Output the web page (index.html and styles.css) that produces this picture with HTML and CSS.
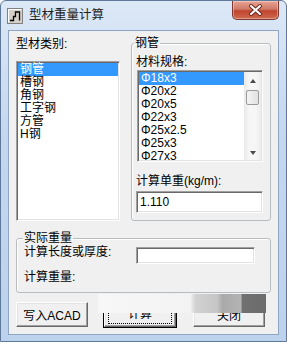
FILE: index.html
```html
<!DOCTYPE html>
<html lang="zh-CN">
<head>
    <meta charset="UTF-8">
    <title>型材重量计算</title>
    <link rel="stylesheet" href="styles.css">
</head>
<body>

    <div class="window">
        <!-- Title Bar -->
        <div class="titlebar">
            <svg class="app-icon" width="16" height="16" viewBox="0 0 16 16">
                <rect x="0.5" y="0.5" width="15" height="15" fill="#d4d0c8" stroke="#808080"/>
                <path d="M1.5 14.5 V1.5 H14.5" fill="none" stroke="#fff"/>
                <path d="M3 12.5 H6.5 V8.5 H8.5 V4 H12.5 V12.5" fill="none" stroke="#000" stroke-width="1.3"/>
            </svg>
            <span class="title">型材重量计算</span>
            <div class="close-btn">
                <svg width="45" height="18" viewBox="0 0 45 18">
                    <path d="M18 5 L27 13 M27 5 L18 13" stroke="#6b2a22" stroke-width="4" stroke-linecap="round"/>
                    <path d="M18 5 L27 13 M27 5 L18 13" stroke="#fff" stroke-width="2" stroke-linecap="round"/>
                </svg>
            </div>
        </div>

        <div class="client">
            <div class="main">
                <div class="category">
                    <div class="label">型材类别:</div>
                    <ul class="listbox cat-list">
                        <li class="selected">钢管</li>
                        <li>槽钢</li>
                        <li>角钢</li>
                        <li>工字钢</li>
                        <li>方管</li>
                        <li>H钢</li>
                    </ul>
                </div>

                <fieldset class="group spec-group">
                    <legend>钢管</legend>
                    <div class="label spec-label">材料规格:</div>
                    <div class="listbox spec-list">
                        <ul class="items">
                            <li class="selected">Φ18x3</li>
                            <li>Φ20x2</li>
                            <li>Φ20x5</li>
                            <li>Φ22x3</li>
                            <li>Φ25x2.5</li>
                            <li>Φ25x3</li>
                            <li>Φ27x3</li>
                        </ul>
                        <div class="scrollbar">
                            <span class="arrow up"></span>
                            <span class="thumb"></span>
                            <span class="arrow down"></span>
                        </div>
                    </div>
                    <div class="label unit-label">计算单重(kg/m):</div>
                    <div class="textbox unit-box">1.110</div>
                </fieldset>
            </div>

            <fieldset class="group weight-group">
                <legend>实际重量</legend>
                <div class="row">
                    <span class="label len-label">计算长度或厚度:</span>
                    <span class="textbox len-box"></span>
                </div>
                <div class="label weight-label">计算重量:</div>
            </fieldset>

            <div class="buttons">
                <button class="btn">写入ACAD</button>
                <button class="btn default"><span class="focus">计算</span></button>
                <button class="btn">关闭</button>
            </div>

            <!-- redraw smear over the buttons -->
            <div class="smear"></div>
        </div>
    </div>

</body>
</html>
```

FILE: styles.css
```css
body {
    margin: 0;
    background: #fff;
}

.window {
    width: 287px;
    height: 342px;
    box-sizing: border-box;
    border: 1px solid #5d7898;
    border-radius: 6px 6px 0 0;
    background: linear-gradient(#dce8f6, #c4d7ef 40%, #bdd2ec);
    font: 12px "Liberation Sans", "Noto Sans CJK SC", sans-serif;
    color: #000;
    overflow: hidden;
}

/* Title Bar */
.titlebar {
    height: 29px;
    display: flex;
    align-items: flex-start;
    padding-left: 6px;
}

.app-icon {
    margin-top: 7px;
    flex: none;
}

.title {
    margin: 7px 0 0 6px;
    font-size: 12.5px;
    line-height: 15px;
    color: #1e1e1e;
}

.close-btn {
    margin-left: auto;
    margin-right: 7px;
    width: 45px;
    height: 18px;
    border: 1px solid #7e3a32;
    border-top: none;
    border-radius: 0 0 5px 5px;
    background: linear-gradient(#e8a393, #d07a68 45%, #c0442f 55%, #cf6a4f);
    box-shadow: inset 0 0 0 1px rgba(255, 255, 255, 0.35);
}

.close-btn svg {
    display: block;
}

/* Client area */
.client {
    position: relative;
    margin: 0 7px;
    height: 305px;
    box-sizing: border-box;
    border: 1px solid #8ea5c3;
    background: #f0f0f0;
    padding: 5px 7px 0 7px;
}

.label {
    line-height: 14px;
    white-space: nowrap;
}

.main {
    display: flex;
    gap: 11px;
}

.category {
    width: 104px;
}

.category .label {
    margin-top: 1px;
}

.listbox {
    margin: 0;
    padding: 1px;
    list-style: none;
    background: #fff;
    border: 1px solid;
    border-color: #a0a0a0 #fff #fff #a0a0a0;
    box-shadow: inset 1px 1px 0 #696969, inset -1px -1px 0 #e3e3e3;
    box-sizing: border-box;
}

.listbox li {
    height: 13px;
    line-height: 13px;
    padding-left: 2px;
    white-space: nowrap;
}

.listbox li.selected {
    background: #3399ff;
    color: #fff;
}

.cat-list {
    margin-top: 10px;
    height: 160px;
    padding-top: 1px;
}

.cat-list li {
    padding-left: 2px;
}

/* Group boxes */
.group {
    margin: 0;
    min-width: 0;
    border: 1px solid #b9bcbf;
    border-radius: 3px;
    box-shadow: inset 1px 1px 0 #fff;
}

.group legend {
    padding: 0 1px;
    line-height: 14px;
}

.spec-group {
    width: 140px;
    box-sizing: border-box;
    padding: 0 7px 7px 4px;
}

.spec-group legend {
    margin-left: -2px;
}

.spec-label {
    margin-top: 5px;
}

.spec-list {
    display: flex;
    margin: 1px 0 0 1px;
    width: 126px;
    height: 92px;
    overflow: hidden;
}

.spec-list .items {
    flex: 1;
    margin: 0;
    padding: 0;
    list-style: none;
    overflow: hidden;
}

.spec-list .items li {
    padding-left: 2px;
}

.scrollbar {
    width: 17px;
    flex: none;
    display: flex;
    flex-direction: column;
    align-items: center;
    background: linear-gradient(to right, #e9e9e9, #f6f6f6 30%, #f6f6f6 70%, #ececec);
}

.arrow {
    width: 0;
    height: 0;
    border-left: 3.5px solid transparent;
    border-right: 3.5px solid transparent;
}

.arrow.up {
    margin-top: 7px;
    border-bottom: 4px solid #4a4a4a;
}

.arrow.down {
    margin-top: auto;
    margin-bottom: 5px;
    border-top: 4px solid #4a4a4a;
}

.thumb {
    margin-top: 7px;
    width: 13px;
    height: 15px;
    box-sizing: border-box;
    border: 1px solid #9a9a9a;
    border-radius: 2px;
    background: linear-gradient(to right, #f4f4f4, #e2e2e2);
}

.unit-label {
    margin-top: 12px;
}

.textbox {
    display: block;
    box-sizing: border-box;
    background: #fff;
    border: 1px solid;
    border-color: #a0a0a0 #fff #fff #a0a0a0;
    box-shadow: inset 1px 1px 0 #696969, inset -1px -1px 0 #e3e3e3;
}

.unit-box {
    margin-top: 3px;
    height: 22px;
    line-height: 20px;
    padding-left: 3px;
}

.weight-group {
    margin-top: 10px;
    padding: 0 7px 8px 7px;
}

.weight-group legend {
    margin-left: -1px;
}

.row {
    display: flex;
    align-items: flex-start;
}

.len-label {
    width: 112px;
}

.len-box {
    margin-top: 2px;
    width: 119px;
    height: 17px;
}

.weight-label {
    margin-top: 6px;
}

/* Buttons */
.buttons {
    display: flex;
    gap: 16px;
    margin-top: 9px;
}

.btn {
    width: 72px;
    height: 25px;
    padding: 0;
    font: inherit;
    color: #000;
    background: #f0f0f0;
    border: 1px solid;
    border-color: #fff #696969 #696969 #fff;
    box-shadow: inset -1px -1px 0 #a0a0a0, inset 1px 1px 0 #e3e3e3;
}

.btn.default {
    outline: 1px solid #000;
}

.btn .focus {
    display: block;
    margin: 0 3px;
    line-height: 17px;
    border: 1px dotted #000;
}

.btn:last-child {
    margin-left: 1px;
}

.smear {
    position: absolute;
    left: 89px;
    top: 263px;
    width: 168px;
    height: 19px;
    background: linear-gradient(to right, #f7f7f7, #f3f3f3 55%, #d2d2d2 58%, #c6c6c6 71%, #aaaaaa 74%, #b3b3b3 85%, #707070 86%, #6c6c6c);
}
```
